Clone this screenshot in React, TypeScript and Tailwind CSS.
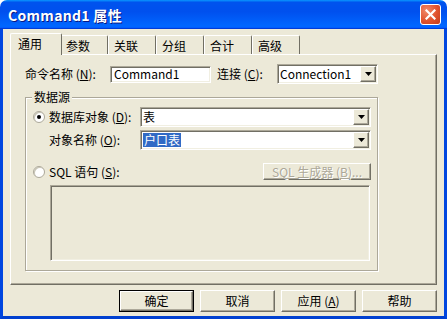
import React from 'react'

const font = "font-['Noto_Sans_CJK_SC','Noto_Sans',sans-serif]"
const sunken = 'border border-t-[#aca899] border-l-[#aca899] border-r-white border-b-white shadow-[inset_1px_1px_#716f64,inset_-1px_-1px_#f1efe2]'
const raised = 'border border-t-white border-l-white border-r-[#716f64] border-b-[#716f64] shadow-[inset_-1px_-1px_#aca899] bg-[#ece9d8]'

function Arrow() {
  return (
    <span className={`w-[16px] h-[16px] flex items-center justify-center shrink-0 ${raised}`}>
      <svg width="7" height="4" viewBox="0 0 7 4"><path d="M0 0h7L3.5 4z" fill="#000" /></svg>
    </span>
  )
}

function Combo({ width, children }: { width: string; children: React.ReactNode }) {
  return (
    <div className={`${width} h-[20px] flex items-center bg-white ${sunken} p-[1px] pl-[2px]`}>
      <div className="flex-1 flex items-center min-w-0 text-[12px] leading-[14px]">{children}</div>
      <Arrow />
    </div>
  )
}

function Radio({ checked }: { checked?: boolean }) {
  return (
    <span className="w-[12px] h-[12px] rounded-full border border-[#aca899] bg-white shadow-[inset_1px_1px_#c9c6b6] flex items-center justify-center shrink-0">
      {checked && <span className="w-[4px] h-[4px] rounded-full bg-black" />}
    </span>
  )
}

const tabs = ['通用', '参数', '关联', '分组', '合计', '高级']

function Button({ label, isDefault }: { label: React.ReactNode; isDefault?: boolean }) {
  return (
    <div className={`w-[75px] h-[22px] ${isDefault ? 'border border-black' : ''}`}>
      <div className={`w-full h-full flex items-center justify-center text-[12px] leading-[14px] ${raised}`}>{label}</div>
    </div>
  )
}

export default function App() {
  return (
    <div className={`w-[447px] h-[319px] flex flex-col ${font} text-black select-none`}>
      {/* title bar */}
      <div className="h-[29px] shrink-0 rounded-t-[7px] flex items-center pl-[8px] pr-[6px] bg-[linear-gradient(180deg,#0997ff_0%,#0053ee_8%,#0050ee_40%,#0066ff_88%,#0066ff_93%,#005bff_95%,#003dd7_96%,#003dd7_100%)]">
        <span className="flex-1 text-white font-bold text-[14px] leading-[16px] tracking-[0.3px] [text-shadow:1px_1px_#0a1883]">Command1 属性</span>
        <div className="w-[21px] h-[21px] rounded-[3px] border border-white bg-[radial-gradient(circle_at_30%_30%,#f08a6a,#e0532e_55%,#c23b1c)] flex items-center justify-center">
          <svg width="11" height="11" viewBox="0 0 11 11">
            <path d="M1.5 1.5l8 8M9.5 1.5l-8 8" stroke="#fff" strokeWidth="2.2" strokeLinecap="square" />
          </svg>
        </div>
      </div>

      {/* client */}
      <div className="flex-1 flex flex-col bg-[#ece9d8] border-x-[3px] border-b-[3px] border-x-[#0046e0] border-b-[#0040d0] px-[7px] pt-[4px]">
        {/* tabs */}
        <div className="h-[21px] flex items-end pl-[2px]">
          {tabs.map((t, i) =>
            i === 0 ? (
              <div key={t} className="relative z-10 -mx-[2px] -mb-px w-[52px] h-[22px] bg-[#ece9d8] border-t border-l border-t-white border-l-white border-r border-r-[#716f64] rounded-t-[2px] pl-[7px] pt-[3px] text-[12px] leading-[14px]">
                {t}
              </div>
            ) : (
              <div key={t} className="w-[48px] h-[19px] border-t border-l border-t-white border-l-white border-r border-r-[#716f64] rounded-t-[2px] pl-[5px] pt-[3px] text-[12px] leading-[14px]">
                {t}
              </div>
            )
          )}
        </div>

        {/* panel */}
        <div className="h-[231px] border border-t-white border-l-white border-r-[#716f64] border-b-[#716f64] shadow-[inset_-1px_-1px_#aca899] pl-[14px] pt-[9px]">
          <div className="h-[20px] flex items-center text-[12px] leading-[14px]">
            <span className="w-[85px]">命令名称 (<u>N</u>):</span>
            <div className={`w-[101px] h-[17px] bg-white ${sunken} pl-[3px] flex items-center text-[12px] leading-[14px]`}>Command1</div>
            <span className="ml-[6px] w-[60px]">连接 (<u>C</u>):</span>
            <Combo width="w-[101px]">Connection1</Combo>
          </div>

          {/* group box */}
          <div className="relative mt-[13px] w-[353px] h-[174px] border border-[#aca899] shadow-[inset_1px_1px_#fff,1px_1px_#fff] pl-[7px] pr-[6px] pt-[9px]">
            <span className="absolute -top-[8px] left-[6px] px-[2px] bg-[#ece9d8] text-[12px] leading-[14px]">数据源</span>

            <div className="h-[20px] flex items-center text-[12px] leading-[14px]">
              <div className="w-[107px] flex items-center gap-[4px]">
                <Radio checked />
                <span>数据库对象 (<u>D</u>):</span>
              </div>
              <Combo width="w-[231px]">表</Combo>
            </div>

            <div className="mt-[3px] h-[20px] flex items-center text-[12px] leading-[14px]">
              <span className="w-[107px] pl-[16px]">对象名称 (<u>O</u>):</span>
              <Combo width="w-[231px]">
                <span className="bg-[#316ac5] text-white px-[1px]">户口表</span>
              </Combo>
            </div>

            <div className="mt-[13px] h-[17px] flex items-center text-[12px] leading-[14px]">
              <div className="flex-1 flex items-center gap-[4px]">
                <Radio />
                <span>SQL 语句 (<u>S</u>):</span>
              </div>
              <div className={`w-[108px] h-[17px] flex items-center justify-center ${raised}`}>
                <span className="whitespace-nowrap text-[#aca899] [text-shadow:1px_1px_#fff]">SQL 生成器 (<u>B</u>)...</span>
              </div>
            </div>

            <div className={`mt-[5px] ml-[17px] w-[320px] h-[76px] ${sunken} bg-[#ece9d8]`} />
          </div>
        </div>

        {/* buttons */}
        <div className="mt-[5px] flex justify-end gap-[6px]">
          <Button label="确定" isDefault />
          <Button label="取消" />
          <Button label={<span>应用 (<u>A</u>)</span>} />
          <Button label="帮助" />
        </div>
      </div>
    </div>
  )
}
